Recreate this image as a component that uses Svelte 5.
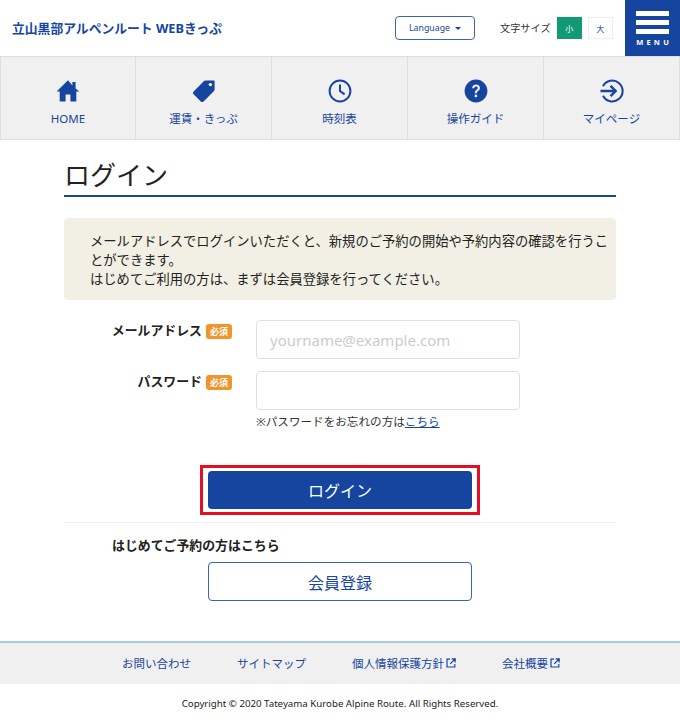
<script>
  const nav = ['HOME', '運賃・きっぷ', '時刻表', '操作ガイド', 'マイページ'];
</script>

<div class="page">
  <header class="top">
    <div class="brand">立山黒部アルペンルート WEBきっぷ</div>
    <div class="lang">Language<span class="caret"></span></div>
    <div class="size">
      <span class="size-label">文字サイズ</span>
      <span class="size-btn active">小</span>
      <span class="size-btn">大</span>
    </div>
    <div class="menu">
      <span class="bar"></span><span class="bar"></span><span class="bar"></span>
      <span class="menu-text">MENU</span>
    </div>
  </header>

  <nav class="nav">
    {#each nav as item, i}
      <div class="nav-item">
        <svg class="nav-icon" viewBox="0 0 24 24" width="24" height="24">
          {#if i === 0}
            <path d="M12 1.2 0.6 12.4h3.1v10h5.9v-7h4.8v7h5.9v-10h3.1L19.6 9.6V3h-3.2v3.4z" fill="#1645a0" />
          {:else if i === 1}
            <path d="M13.4 1.4h8.2c.6 0 1 .4 1 1v8.2c0 .5-.2 1-.6 1.4L11.6 22.4c-.8.8-2 .8-2.8 0l-7.2-7.2c-.8-.8-.8-2 0-2.8L12 2c.4-.4.9-.6 1.4-.6z" fill="#1645a0" />
            <circle cx="18.4" cy="5.6" r="1.7" fill="#f0f0f0" />
          {:else if i === 2}
            <circle cx="12" cy="12" r="10.4" fill="none" stroke="#1645a0" stroke-width="2" />
            <path d="M12 5.5V12l4.6 3.4" fill="none" stroke="#1645a0" stroke-width="2" />
          {:else if i === 3}
            <circle cx="12" cy="12" r="11.4" fill="#1645a0" />
            <path d="M8.2 9.2c0-2.2 1.7-3.6 3.9-3.6s3.8 1.3 3.8 3.3c0 2.9-3.1 2.9-3.1 5.3h-2c-.1-3.5 3-3.5 3-5.2 0-.9-.7-1.5-1.7-1.5s-1.8.7-1.8 1.7z" fill="#f0f0f0" />
            <rect x="10.7" y="15.6" width="2.4" height="2.5" fill="#f0f0f0" />
          {:else}
            <path d="M3 7.2A10.4 10.4 0 1 1 3 16.8" fill="none" stroke="#1645a0" stroke-width="2" />
            <path d="M0.5 12h14M10.5 6.8l5.2 5.2-5.2 5.2" fill="none" stroke="#1645a0" stroke-width="2.4" />
          {/if}
        </svg>
        <span class="nav-label">{item}</span>
      </div>
    {/each}
  </nav>

  <main class="main">
    <h1 class="title">ログイン</h1>
    <div class="notice">
      <p>メールアドレスでログインいただくと、新規のご予約の開始や予約内容の確認を行うことができます。</p>
      <p>はじめてご利用の方は、まずは会員登録を行ってください。</p>
    </div>

    <div class="row">
      <div class="label"><b>メールアドレス</b><span class="req">必須</span></div>
      <input class="input" type="text" placeholder="yourname@example.com" />
    </div>
    <div class="row pw">
      <div class="label"><b>パスワード</b><span class="req">必須</span></div>
      <div>
        <input class="input" type="password" />
        <p class="forgot">※パスワードをお忘れの方は<a href="#top">こちら</a></p>
      </div>
    </div>

    <div class="login-wrap">
      <div class="highlight"><button class="login">ログイン</button></div>
    </div>
    <div class="first">
      <h2 class="first-title">はじめてご予約の方はこちら</h2>
      <button class="register">会員登録</button>
    </div>
  </main>

  <footer class="footer">
    <div class="links">
      <a href="#top">お問い合わせ</a>
      <a href="#top">サイトマップ</a>
      <a href="#top">個人情報保護方針<svg class="ext" viewBox="0 0 10 10" width="10" height="10"><path d="M4 1.2H1v7.8h7.8V6M5.6 .8h3.6v3.6M9 1 4.2 5.8" fill="none" stroke="#1645a0" stroke-width="1.2" /></svg></a>
      <a href="#top">会社概要<svg class="ext" viewBox="0 0 10 10" width="10" height="10"><path d="M4 1.2H1v7.8h7.8V6M5.6 .8h3.6v3.6M9 1 4.2 5.8" fill="none" stroke="#1645a0" stroke-width="1.2" /></svg></a>
    </div>
    <div class="copy">Copyright © 2020 Tateyama Kurobe Alpine Route. All Rights Reserved.</div>
  </footer>
</div>

<style>
  :global(body) { margin: 0; background: #fff; }
  .page {
    width: 680px;
    height: 728px;
    overflow: hidden;
    font-family: "Noto Sans", "Noto Sans CJK JP", sans-serif;
    color: #222;
    display: flex;
    flex-direction: column;
  }
  .top { height: 56px; display: flex; align-items: center; flex: none; }
  .brand { margin-left: 12px; padding-bottom: 1px; font-size: 12.8px; font-weight: 700; color: #1645a0; width: 383px; white-space: nowrap; }
  .lang {
    width: 80px; height: 24px; box-sizing: border-box; border: 1px solid #3d64b0; border-radius: 4px;
    display: flex; align-items: center; justify-content: center; gap: 5px;
    font-size: 8.8px; color: #1645a0; margin-right: 25px;
  }
  .caret { width: 0; height: 0; border-left: 3px solid transparent; border-right: 3px solid transparent; border-top: 3px solid #1645a0; }
  .size { display: flex; align-items: center; width: 125px; }
  .size-label { font-size: 10.2px; color: #333; margin-right: 6px; padding-bottom: 2px; white-space: nowrap; }
  .size-btn {
    width: 25px; height: 22px; box-sizing: border-box; border: 1px solid #eee; font-size: 8px; color: #1645a0;
    display: flex; align-items: center; justify-content: center; margin-right: 6px;
  }
  .size-btn.active { background: #129a76; border-color: #129a76; color: #fff; }
  .menu {
    width: 55px; height: 56px; background: #1645a0; flex: none; margin-left: auto;
    display: flex; flex-direction: column; align-items: center; padding-top: 11px; box-sizing: border-box;
  }
  .bar { width: 33px; height: 5px; background: #fff; margin-bottom: 4px; flex: none; }
  .menu-text { font-size: 7.5px; font-weight: 700; color: #fff; letter-spacing: 3.2px; margin-right: -3.2px; line-height: 10px; margin-top: -1px; }

  .nav { display: flex; height: 84px; flex: none; background: #f0f0f0; border-top: 1px solid #ddd; border-bottom: 1px solid #ddd; box-sizing: border-box; }
  .nav-item {
    width: 136px; box-sizing: border-box; border-left: 1px solid #ddd; border-right: 1px solid #ddd;
    display: flex; flex-direction: column; align-items: center; padding-top: 22px;
  }
  .nav-item + .nav-item { border-left: 0; }
  .nav-label { margin-top: 7px; font-size: 11.5px; line-height: 18px; color: #1645a0; }

  .main { padding: 0 64px; flex: 1; }
  .title { margin: 16px 0 0; font-size: 26px; font-weight: 400; line-height: 38px; height: 39px; border-bottom: 2px solid #1645a0; color: #222; }
  .notice { margin-top: 21px; background: #f2f0e4; border-radius: 4px; height: 82px; box-sizing: border-box; padding: 14px 6px 13px 26px; font-size: 13.3px; line-height: 19px; color: #222; }
  .notice p { margin: 0; }

  .row { display: flex; margin-top: 20px; }
  .row.pw { margin-top: 12px; }
  .label { width: 144px; margin: 0 24px; display: flex; justify-content: flex-end; align-items: flex-start; gap: 4px; font-size: 12.9px; white-space: nowrap; }
  .label b { font-weight: 700; line-height: 20px; }
  .req { background: #f0952b; color: #fff; font-size: 9px; font-weight: 700; width: 26px; height: 15px; line-height: 15px; text-align: center; border-radius: 3px; margin-top: 4px; flex: none; }
  .input {
    display: block; width: 264px; height: 39px; box-sizing: border-box;
    border: 1px solid #dcdfe6; border-radius: 4px; padding: 0 13px; font: inherit; font-size: 15px; background: #fff;
  }
  .input::placeholder { color: #ccc; opacity: 1; }
  .forgot { margin: 3px 0 0; font-size: 11.6px; line-height: 18px; color: #333; }
  .forgot a { color: #1645a0; }

  .login-wrap { display: flex; justify-content: center; margin-top: 34px; padding-bottom: 7px; border-bottom: 1px solid #eee; }
  .highlight { border: 3px solid #e60e23; padding: 3px 5px; }
  .login { display: block; width: 264px; height: 38px; background: #1645a0; border: 0; border-radius: 4px; color: #fff; font: inherit; font-size: 16px; }

  .first-title { margin: 12px 0 0 48px; font-size: 12.9px; font-weight: 700; line-height: 20px; color: #222; }
  .register { display: block; margin: 7px auto 0; width: 264px; height: 39px; background: #fff; border: 1px solid #3d64b0; border-radius: 4px; color: #1645a0; font: inherit; font-size: 16px; }

  .footer { flex: none; border-top: 2px solid #a9cbe6; }
  .links { height: 41px; box-sizing: border-box; padding-bottom: 1px; background: #f0f0f0; display: flex; align-items: center; padding-left: 122px; gap: 46px; font-size: 11.5px; }
  .links a { color: #1645a0; text-decoration: none; display: flex; align-items: center; }
  .ext { margin-left: 2px; }
  .copy { height: 38px; margin-bottom: 6px; display: flex; align-items: center; justify-content: center; font-size: 9.7px; color: #222; }
</style>
